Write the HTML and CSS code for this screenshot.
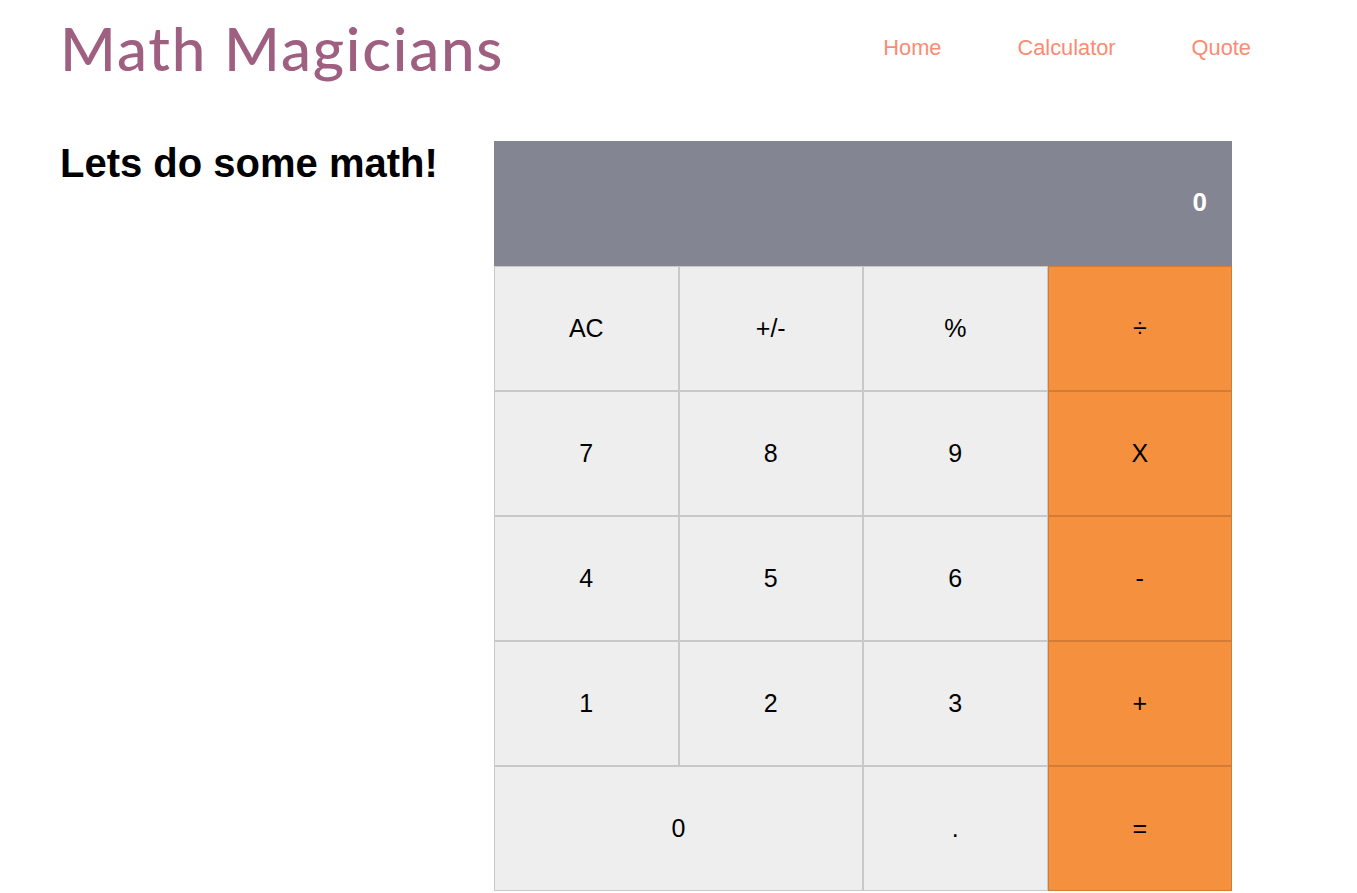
FILE: index.html
```html
<!DOCTYPE html>
<html lang="en">
<head>
<meta charset="utf-8">
<title>Math Magicians</title>
<link rel="stylesheet" href="styles.css">
</head>
<body>
<header class="header">
  <h1 class="logo">Math Magicians</h1>
  <nav class="nav">
    <a class="nav-link" href="#">Home</a>
    <a class="nav-link" href="#">Calculator</a>
    <a class="nav-link" href="#">Quote</a>
  </nav>
</header>
<main class="main">
  <h2 class="intro">Lets do some math!</h2>
  <div class="calc">
    <div class="display">0</div>
    <button class="key">AC</button>
    <button class="key">+/-</button>
    <button class="key">%</button>
    <button class="key op">÷</button>
    <button class="key">7</button>
    <button class="key">8</button>
    <button class="key">9</button>
    <button class="key op">X</button>
    <button class="key">4</button>
    <button class="key">5</button>
    <button class="key">6</button>
    <button class="key op">-</button>
    <button class="key">1</button>
    <button class="key">2</button>
    <button class="key">3</button>
    <button class="key op">+</button>
    <button class="key wide">0</button>
    <button class="key">.</button>
    <button class="key op">=</button>
  </div>
</main>
</body>
</html>
```
FILE: styles.css
```css
* { box-sizing: border-box; }
html, body { margin: 0; padding: 0; background: #fff; }
body { font-family: "Liberation Sans", Arial, sans-serif; color: #000; }

.header {
  display: flex;
  align-items: center;
  justify-content: space-between;
  padding: 0 106px 0 60px;
  height: 96px;
}
.logo {
  margin: 0;
  font-family: Lato, "Noto Sans", sans-serif;
  font-weight: 500;
  font-size: 60px;
  color: #9e5f80;
  line-height: 1;
  letter-spacing: 1.8px;
}
.nav {
  display: flex;
  gap: 76px;
  margin-top: 0;
}
.nav-link {
  font-size: 21.8px;
  color: #fa8b73;
  text-decoration: none;
}

.main {
  display: flex;
  align-items: flex-start;
  padding-left: 60px;
  gap: 58px;
  margin-top: 45px;
}
.intro {
  margin: 0;
  font-size: 40px;
  font-weight: bold;
  line-height: 1;
  padding-top: 2px;
  width: 376px;
  white-space: nowrap;
}
.calc {
  display: grid;
  grid-template-columns: repeat(4, 184.5px);
  grid-template-rows: repeat(6, 125px);
}
.display {
  grid-column: 1 / 5;
  background: #848592;
  color: #fff;
  font-weight: bold;
  font-size: 26px;
  display: flex;
  align-items: center;
  justify-content: flex-end;
  padding: 0 25px 2px 0;
}
.key {
  font-family: "Liberation Sans", Arial, sans-serif;
  font-size: 25px;
  color: #000;
  background: #eeeeee;
  border: 1px solid #c8c8c8;
  margin: 0;
  padding: 0;
}
.key.op {
  background: #f5913e;
  border-color: #d27c36;
}
.key.wide { grid-column: span 2; }
```
